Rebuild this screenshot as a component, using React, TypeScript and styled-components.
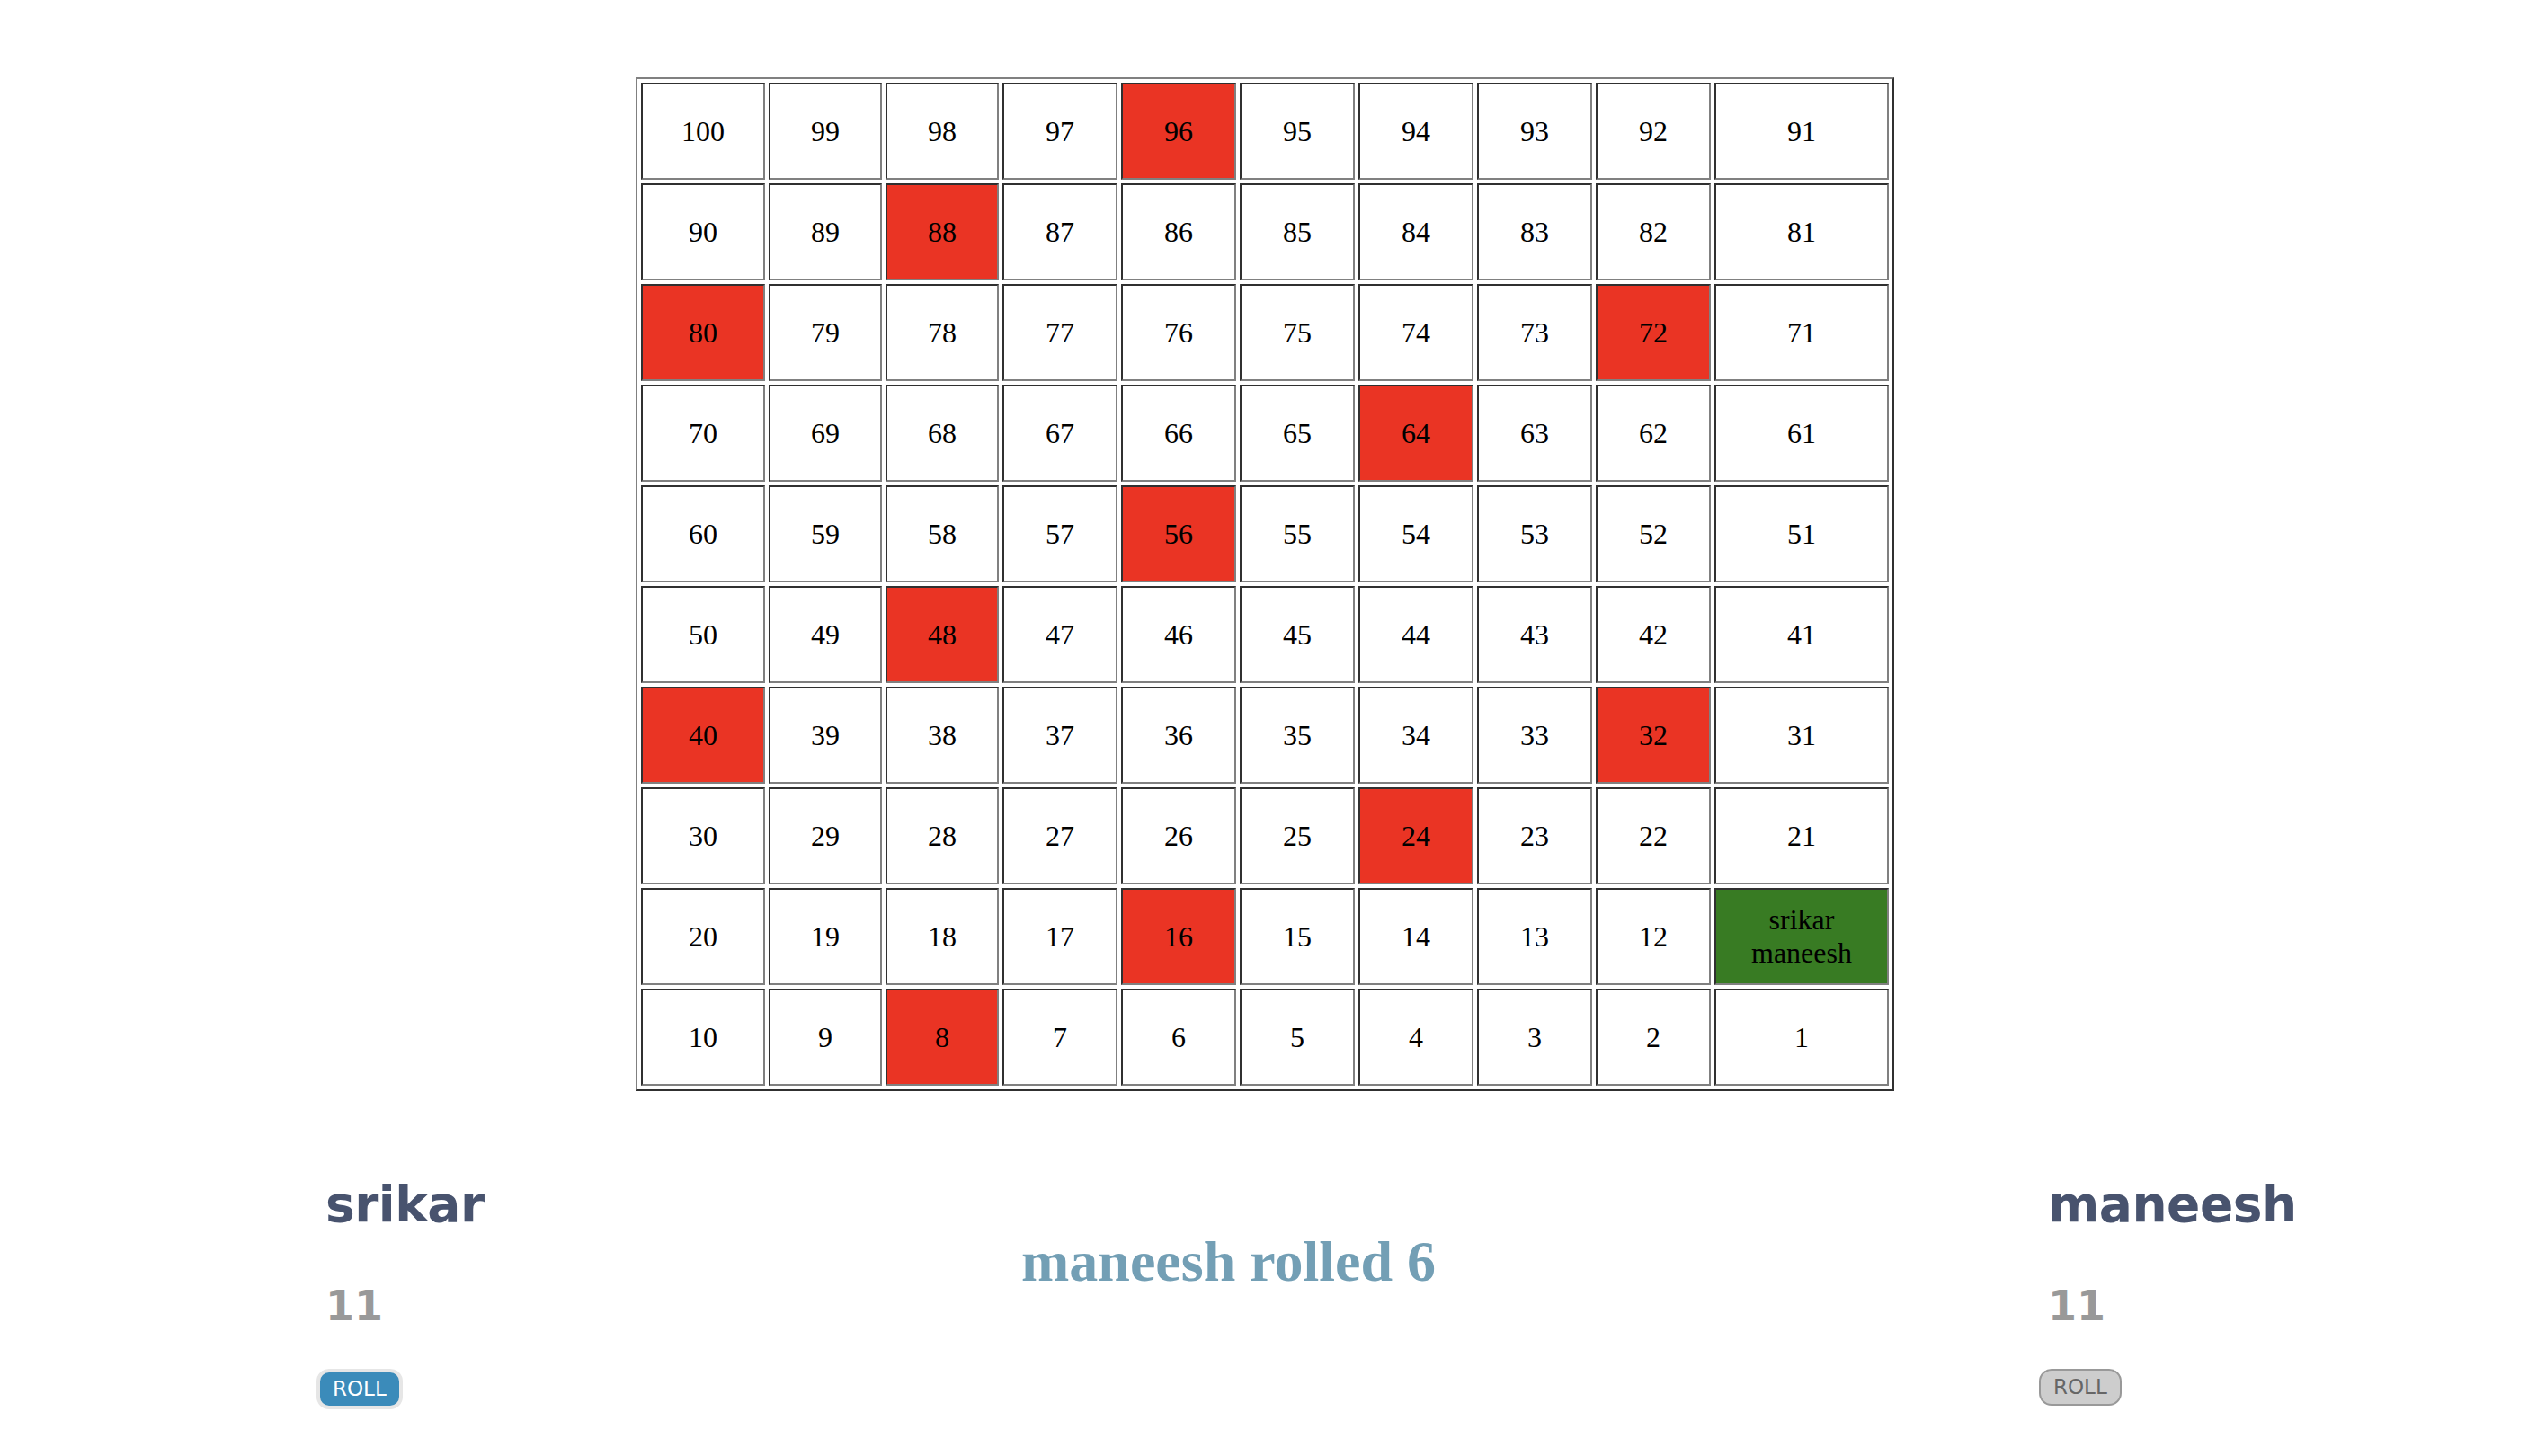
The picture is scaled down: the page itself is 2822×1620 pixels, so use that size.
import React from 'react';
import styled, { createGlobalStyle } from 'styled-components';

const GlobalStyle = createGlobalStyle`
    html, body {
        margin: 0;
        padding: 0;
        background: #fff;
    }
`;

const players = [
    { name: 'srikar', position: 11, active: true },
    { name: 'maneesh', position: 11, active: false },
];

const colWidths = [138, 126, 126, 128, 128, 128, 128, 128, 128, 194];

const Page = styled.div`
    padding: 86px 8px 0 0;
    min-height: 1620px;
    box-sizing: border-box;
    font-family: 'Liberation Serif', 'Times New Roman', serif;
`;

const Board = styled.table`
    width: 1400px;
    margin: 0 auto;
    table-layout: fixed;
    border-spacing: 4px;
    border: 2px solid;
    border-color: #808080 #303030 #303030 #808080;
`;

const Col = styled.col<{ $w: number }>`
    width: ${(p) => p.$w}px;
`;

const Row = styled.tr`
    height: 108px;
`;

const Cell = styled.td<{ $kind: 'plain' | 'snake' | 'player' }>`
    box-sizing: border-box;
    padding: 0;
    border: 2px solid;
    border-color: #303030 #808080 #808080 #303030;
    text-align: center;
    vertical-align: middle;
    font-size: 32px;
    line-height: 1.15;
    color: #000;
    background: ${(p) => (p.$kind === 'snake' ? '#ea3424' : p.$kind === 'player' ? '#387b23' : '#fff')};
`;

const Footer = styled.div`
    display: grid;
    grid-template-columns: 774px 1142px 1fr;
    padding-left: 362px;
    margin-top: 94px;
`;

const Player = styled.div`
    display: flex;
    flex-direction: column;
    align-items: flex-start;
    font-family: 'Comic Sans MS', 'DejaVu Sans', sans-serif;
`;

const PlayerName = styled.div`
    font-size: 55px;
    line-height: 65px;
    font-weight: bold;
    color: #48536e;
    letter-spacing: -0.5px;
`;

const PlayerScore = styled.div`
    margin-top: 53px;
    font-size: 46px;
    line-height: 55px;
    font-weight: bold;
    color: #999;
`;

const RollButton = styled.button<{ $active: boolean }>`
    margin-top: 42px;
    margin-left: -10px;
    box-sizing: border-box;
    height: ${(p) => (p.$active ? 45 : 41)}px;
    padding: 0 14px;
    border-radius: 14px;
    font-family: 'Comic Sans MS', 'DejaVu Sans', sans-serif;
    font-size: 23px;
    line-height: 1;
    cursor: pointer;
    border: ${(p) => (p.$active ? '4px solid #e6e6e6' : '2px solid #999')};
    background: ${(p) => (p.$active ? '#3b8bba' : '#cdcdcd')};
    color: ${(p) => (p.$active ? '#fff' : '#666')};
`;

const Status = styled.div`
    margin-top: 60px;
    font-size: 64px;
    line-height: 72px;
    font-weight: bold;
    color: #739fb5;
    font-family: 'Liberation Serif', 'Times New Roman', serif;
`;

const rows = Array.from({ length: 10 }, (_, r) =>
    Array.from({ length: 10 }, (_, c) => 100 - r * 10 - c)
);

export default function App() {
    return (
        <Page>
            <GlobalStyle />
            <Board>
                <colgroup>
                    {colWidths.map((w, i) => (
                        <Col key={i} $w={w} />
                    ))}
                </colgroup>
                <tbody>
                    {rows.map((row, r) => (
                        <Row key={r}>
                            {row.map((n) => {
                                const here = players.filter((pl) => pl.position === n);
                                const kind = here.length ? 'player' : n % 8 === 0 ? 'snake' : 'plain';
                                return (
                                    <Cell key={n} $kind={kind}>
                                        {here.length
                                            ? here.map((pl) => <div key={pl.name}>{pl.name}</div>)
                                            : n}
                                    </Cell>
                                );
                            })}
                        </Row>
                    ))}
                </tbody>
            </Board>
            <Footer>
                <Player>
                    <PlayerName>{players[0].name}</PlayerName>
                    <PlayerScore>{players[0].position}</PlayerScore>
                    <RollButton $active={players[0].active}>ROLL</RollButton>
                </Player>
                <Status>maneesh rolled 6</Status>
                <Player>
                    <PlayerName>{players[1].name}</PlayerName>
                    <PlayerScore>{players[1].position}</PlayerScore>
                    <RollButton $active={players[1].active}>ROLL</RollButton>
                </Player>
            </Footer>
        </Page>
    );
}
